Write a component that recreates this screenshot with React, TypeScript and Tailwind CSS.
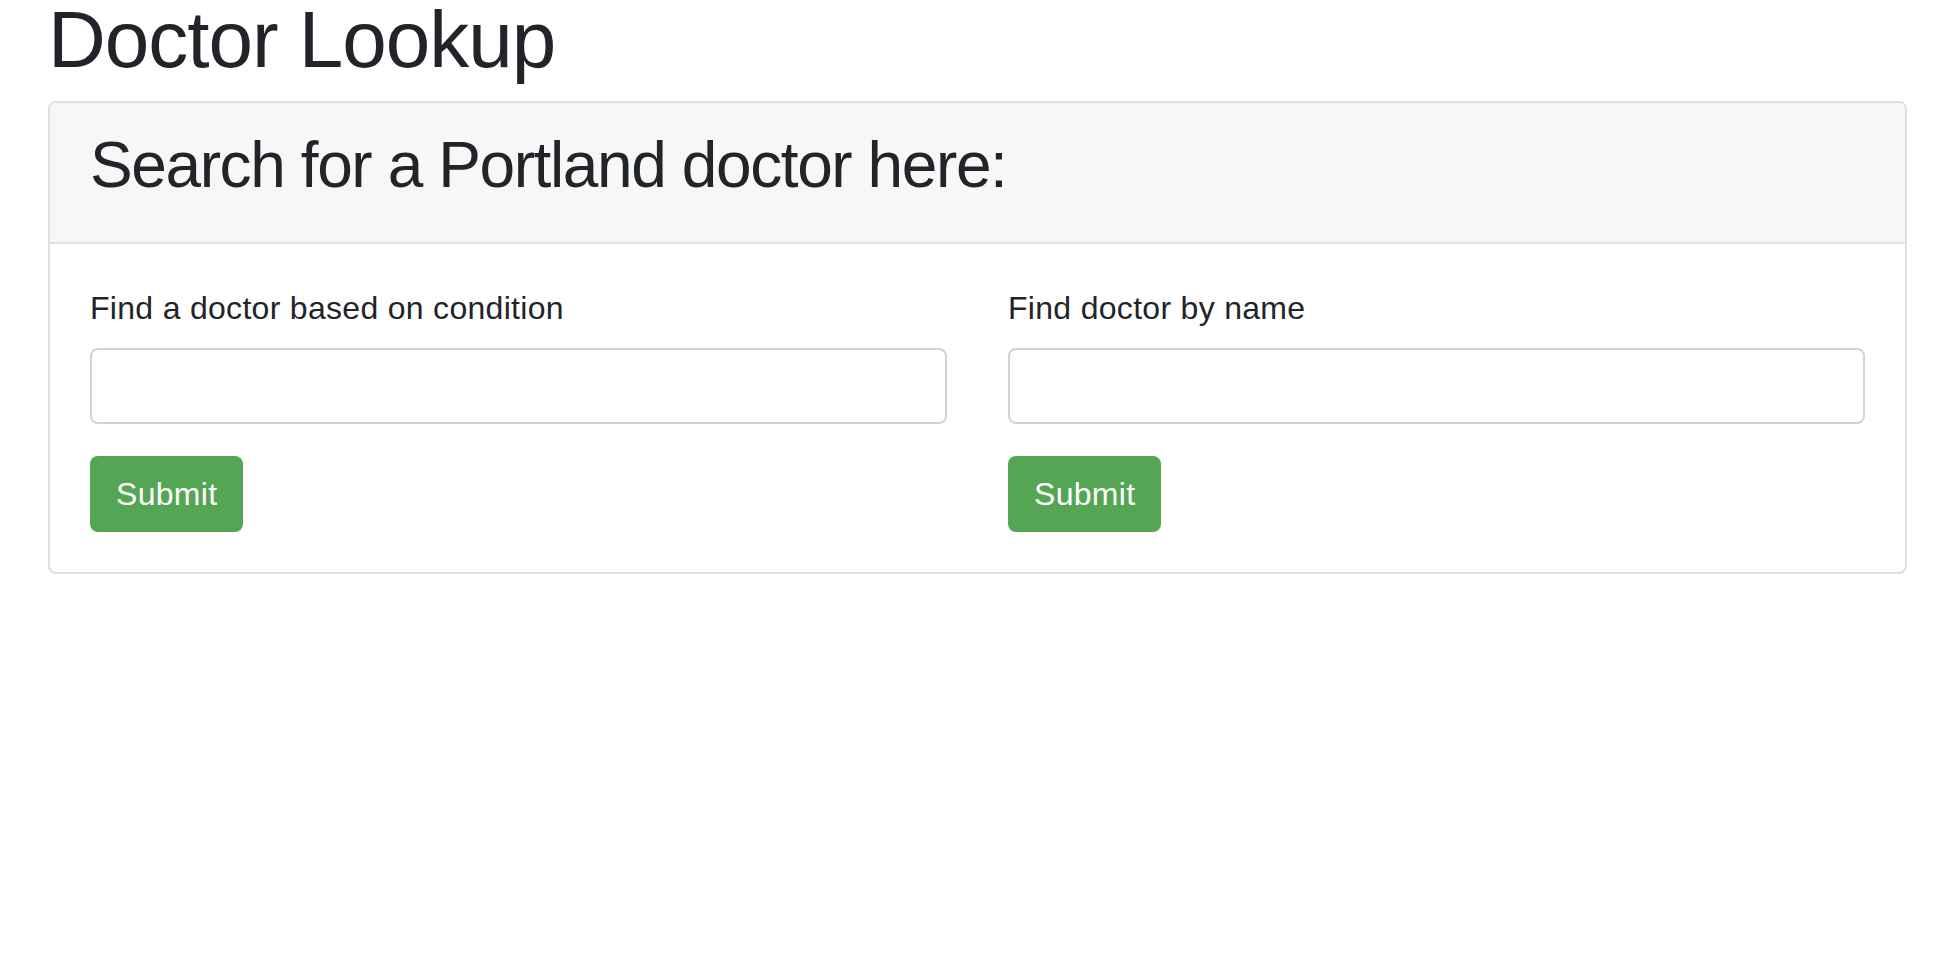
import React from 'react'

const Field = ({ label }: { label: string }) => (
  <div className="flex flex-col">
    <label className="mb-[16px] text-[32px] leading-[48px] tracking-[0.3px]">{label}</label>
    <input
      type="text"
      className="mb-[32px] h-[76px] w-full rounded-[8px] border-2 border-[#ced4da] bg-white px-[24px] text-[32px] outline-none"
    />
    <div>
      <button className="h-[76px] rounded-[8px] bg-[#54a554] px-[26px] text-[32px] leading-[48px] tracking-[0.3px] text-white">
        Submit
      </button>
    </div>
  </div>
)

const App = () => {
  return (
    <div className="min-h-screen bg-white px-[48px] text-[#212529] font-['Liberation_Sans',Arial,sans-serif]">
      <h1 className="mb-[21px] text-[80px] font-normal leading-[80px] tracking-[-1px]">Doctor Lookup</h1>

      <div className="w-[1859px] rounded-[8px] border-2 border-[#dfdfdf]">
        {/* header */}
        <div className="border-b-2 border-[#dfdfdf] bg-[#f7f7f7] px-[40px] pt-[24px] pb-[22px] rounded-t-[6px]">
          <h2 className="mb-[16px] text-[64px] font-normal leading-[77px] tracking-[-1.4px]">
            Search for a Portland doctor here:
          </h2>
        </div>

        {/* body */}
        <div className="grid grid-cols-2 gap-x-[61px] px-[40px] py-[40px]">
          <Field label="Find a doctor based on condition" />
          <Field label="Find doctor by name" />
        </div>
      </div>
    </div>
  )
}

export default App
